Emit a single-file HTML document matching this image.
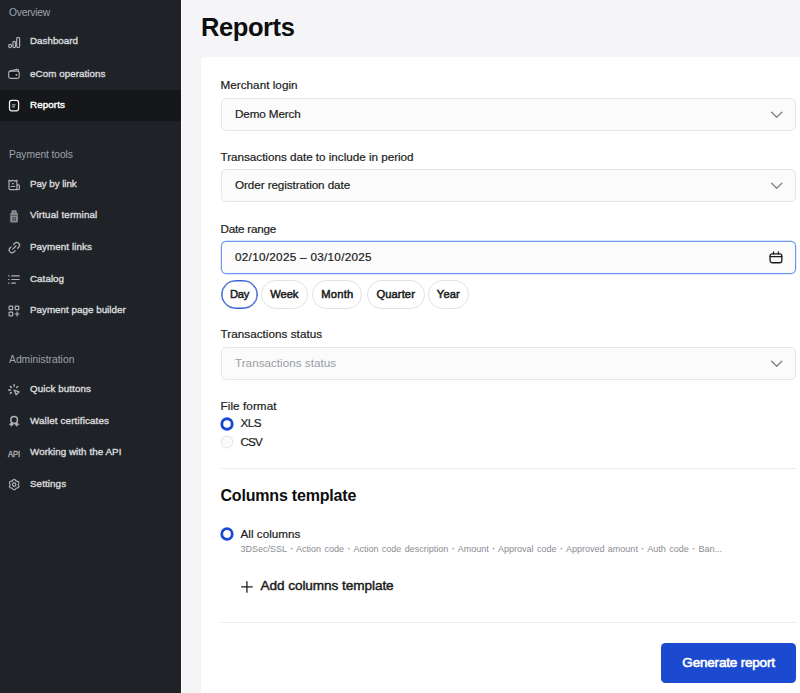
<!DOCTYPE html>
<html lang="en">
<head>
<meta charset="utf-8">
<title>Reports</title>
<style>
*{box-sizing:border-box;margin:0;padding:0}
html,body{width:800px;height:693px;overflow:hidden;background:#f5f5f7;font-family:"Liberation Sans",Arial,sans-serif;color:#1a1c20}
#side{position:absolute;left:0;top:0;width:181px;height:693px;background:#1f2227;color:#e6e7ea}
.sec{position:absolute;left:9px;font-size:10.3px;color:#9ea3ad;line-height:14px;white-space:nowrap}
.it{position:absolute;left:0;width:181px;height:31.5px;font-size:9.8px;color:#d6d7da;white-space:nowrap;-webkit-text-stroke:.4px #d6d7da}
.it span{position:absolute;left:30px;top:9px;line-height:13px}
.it.act{background:#15171a;color:#fff;-webkit-text-stroke-color:#fff}
#main{position:absolute;left:181px;top:0;width:619px;height:693px;background:#f5f5f7;box-shadow:inset 1px 0 0 #fcfcfd}
h1{position:absolute;left:20px;top:10px;font-size:25.5px;font-weight:bold;line-height:34px;color:#0d0e10;white-space:nowrap}
#card{position:absolute;left:19.5px;top:57px;width:620px;height:660px;background:#fff;border-radius:4px 0 0 0}
.lbl{position:absolute;left:20px;font-size:11.7px;line-height:16px;color:#1a1c20;white-space:nowrap;-webkit-text-stroke:.2px #1a1c20}
.fld{position:absolute;left:20px;width:575.5px;height:33.2px;border:1px solid #e5e6e8;border-radius:5px;background:#fbfbfb;font-size:11.7px;line-height:30px;padding-left:13.5px;color:#1a1c20;white-space:nowrap;-webkit-text-stroke:.2px #1a1c20}
.fld.focus{border-color:#6a98f0;box-shadow:0 0 0 .4px rgba(106,152,240,.5)}
.fld svg{position:absolute;left:548px;top:12px;width:14px;height:9px;fill:none;stroke:#7f8287;stroke-width:1.3;stroke-linecap:round;stroke-linejoin:round;overflow:visible}
.chip{position:absolute;top:222.7px;height:28.9px;border:1px solid #dfe1e5;border-radius:15px;font-size:11.2px;line-height:27.5px;text-align:center;color:#1a1c20;background:#fff;-webkit-text-stroke:.5px #1a1c20;white-space:nowrap}
.chip.on{border-color:#3560d8;box-shadow:inset 0 0 0 .6px #3560d8}
.radio{position:absolute;left:19.8px;width:14px;height:14px}
.rl{position:absolute;left:40px;font-size:11.7px;line-height:16px;white-space:nowrap;-webkit-text-stroke:.2px #1a1c20}
.hr{position:absolute;left:20px;width:575.5px;height:1px;background:#e9eaed}
h2{position:absolute;left:20px;top:429px;font-size:16px;font-weight:bold;line-height:20px;color:#0d0e10;white-space:nowrap}
.sub{position:absolute;left:40px;top:486px;font-size:9px;line-height:12px;color:#8a8c92;white-space:nowrap}
.add{position:absolute;left:60px;top:520px;font-size:13.6px;line-height:18px;color:#1a1c20;white-space:nowrap;-webkit-text-stroke:.45px #1a1c20}
.btn{position:absolute;left:460.4px;top:586.1px;width:135.4px;height:39.8px;background:#1b49d0;border-radius:4.5px;color:#fff;font-size:13.5px;line-height:39px;text-align:center;-webkit-text-stroke:.6px #fff;white-space:nowrap}
#s1{letter-spacing:-0.24px}
#s2{letter-spacing:-0.11px}
#s3{letter-spacing:0.01px}
#i1{letter-spacing:0.01px}
#i2{letter-spacing:0.06px}
#i3{letter-spacing:0.10px}
#i4{letter-spacing:-0.06px}
#i5{letter-spacing:0.14px}
#i6{letter-spacing:0.07px}
#i7{letter-spacing:0.05px}
#i8{letter-spacing:0.02px}
#i9{letter-spacing:0.08px}
#i10{letter-spacing:0.14px}
#i11{letter-spacing:0.06px}
#i12{letter-spacing:0.09px}
#h1{letter-spacing:-0.41px}
#l1{letter-spacing:0.03px}
#f1{letter-spacing:-0.12px}
#l2{letter-spacing:-0.02px}
#f2{letter-spacing:-0.08px}
#l3{letter-spacing:-0.23px}
#f3{letter-spacing:0.30px}
#c1{letter-spacing:-0.17px}
#c2{letter-spacing:-0.05px}
#c3{letter-spacing:0.24px}
#c4{letter-spacing:0.08px}
#c5{letter-spacing:0.12px}
#l4{letter-spacing:0.04px}
#f4{letter-spacing:0.01px}
#l5{letter-spacing:0.08px}
#r1{letter-spacing:-0.56px}
#r2{letter-spacing:-0.82px}
#h2{letter-spacing:-0.19px}
#r3{letter-spacing:0.02px}
#sub{word-spacing:0.93px}
#add{letter-spacing:-0.07px}
#btn{letter-spacing:-0.19px}
</style>
</head>
<body>
<div id="side">
<svg id="ico" width="181" height="693" viewBox="0 0 181 693" style="position:absolute;left:0;top:0;z-index:2;fill:none;stroke:#aeb1b7;stroke-width:1.2;stroke-linecap:round;stroke-linejoin:round">
<g><rect x="8.6" y="44.4" width="3" height="3.2" rx="1.5"/><rect x="12.9" y="41.3" width="2.6" height="6.3" rx="1.3"/><rect x="16.7" y="37.4" width="2.9" height="10.2" rx="1.45"/></g>
<g><rect x="8.7" y="71.2" width="10.5" height="7.1" rx="1.8" fill="#15171a"/><path d="M9.6 71 L17 69.3 Q18.3 69.1 18.4 70.2 V71"/><circle cx="16.4" cy="74.8" r=".9" fill="#c0c3c8" stroke="none"/></g>
<g stroke="#f2f2f2" stroke-width="1.25"><rect x="9.5" y="100.4" width="9.1" height="10.4" rx="2.2"/><path d="M12.3 104.9 H15.2 M12.3 106.9 H14.5" stroke-width="1" stroke="#c8c8c8"/></g>
<g><path d="M9 180.2 L10.9 181.1 L12.9 180.2 L14.9 181.1 L16.9 180.2 V189.7 M9 180.2 V188.6 Q9 189.7 10.1 189.7 H18.2 Q19.4 189.7 19.4 188.500 V186.100 Q19.400 184.900 18.200 184.900 H17.100 M11.100 186.500 H14.800"/><circle cx="12.900" cy="183.600" r=".9" fill="#aeb1b7" stroke="none"/></g>
<g stroke="none"><path fill="#8a8d93" d="M11.500 211.200 Q11.500 210.200 12.500 210.200 H15.700 Q16.700 210.200 16.700 211.200 V212.500 L17.900 213.700 V221.300 Q17.900 222.500 16.700 222.500 H11.400 Q10.200 222.500 10.200 221.300 V213.700 L11.500 212.500 Z"/><path d="M11.300 215.300 H16.900" stroke="#3b3e44" stroke-width=".7"/><rect x="12.400" y="217.300" width="1.400" height="1.300" fill="#2b2e33"/><rect x="14.500" y="217.300" width="1.400" height="1.300" fill="#2b2e33"/><rect x="12.400" y="219.300" width="1.400" height="1.300" fill="#2b2e33"/><rect x="14.500" y="219.300" width="1.400" height="1.300" fill="#2b2e33"/><rect x="13.700" y="211.900" width="1.400" height=".9" fill="#4a4d53"/></g>
<g transform="translate(14.35 247.6) rotate(-45) scale(.557) translate(-12 -12)" stroke-width="2.2"><path d="M15 7h3a5 5 0 0 1 5 5 5 5 0 0 1-5 5h-3m-6 0H6a5 5 0 0 1-5-5 5 5 0 0 1 5-5h3M8 12h8"/></g>
<g stroke-width="1.15"><path d="M8.6 275.9 H9.1 M8.6 279.5 H9.1 M8.6 283.1 H9.1 M11.7 275.9 H19.2 M11.7 279.5 H19.2 M11.7 283.1 H15.5"/></g>
<g><rect x="9.1" y="306.1" width="3.6" height="3.6" rx=".6"/><rect x="15.2" y="306.1" width="3.600" height="3.600" rx=".6"/><rect x="9.1" y="312.200" width="3.600" height="3.600" rx=".6"/><path d="M17.100 312.100 V315.900 M15.200 314 H19" stroke-width="1.2"/></g>
<g><path d="M14.100 390.100 L19.100 391.800 L16.100 394.800 Z" stroke-width="1.25"/><path d="M14.100 384.500 V386.200 M10.300 386.400 L11.600 387.500 M8.500 390 H10.600 M10.300 393.400 L11.500 392.400 M17.800 386.500 L16.600 387.500" stroke-width="1.4"/></g>
<g><circle cx="14.150" cy="419.900" r="3.300" stroke-width="1.5"/><path d="M11.300 422.600 L9.300 424.600 L10.900 424.900 L11.500 426.400 L13.500 424 Z M17 422.600 L19 424.600 L17.400 424.900 L16.800 426.400 L14.800 424 Z" fill="#aeb1b7" stroke-width=".6"/></g>
<text x="7.900" y="456.600" font-family="Liberation Sans, Arial, sans-serif" font-size="8.200" textLength="12.300" lengthAdjust="spacingAndGlyphs" fill="#aeb1b7" stroke="#aeb1b7" stroke-width=".35">API</text>
<g stroke-width="1.25"><path d="M18.15 484.60 L18.31 484.24 L18.52 483.83 L18.70 483.38 L18.79 482.91 L18.77 482.45 L18.61 482.03 L18.32 481.68 L17.93 481.42 L17.48 481.27 L17.00 481.20 L16.54 481.18 L16.15 481.14 L15.91 480.82 L15.67 480.43 L15.37 480.05 L15.01 479.73 L14.59 479.52 L14.15 479.45 L13.71 479.52 L13.29 479.73 L12.93 480.05 L12.63 480.43 L12.39 480.82 L12.15 481.14 L11.76 481.18 L11.30 481.20 L10.82 481.27 L10.37 481.42 L9.98 481.68 L9.69 482.03 L9.53 482.45 L9.51 482.91 L9.60 483.38 L9.78 483.83 L9.99 484.24 L10.15 484.60 L9.99 484.96 L9.78 485.37 L9.60 485.82 L9.51 486.29 L9.53 486.75 L9.69 487.18 L9.98 487.52 L10.37 487.78 L10.82 487.93 L11.30 488.00 L11.76 488.02 L12.15 488.06 L12.39 488.38 L12.63 488.77 L12.93 489.15 L13.29 489.47 L13.71 489.68 L14.15 489.75 L14.59 489.68 L15.01 489.47 L15.37 489.15 L15.67 488.77 L15.91 488.38 L16.15 488.06 L16.54 488.02 L17.00 488.00 L17.48 487.93 L17.93 487.78 L18.32 487.52 L18.61 487.18 L18.77 486.75 L18.79 486.29 L18.70 485.82 L18.52 485.37 L18.31 484.96Z"/><circle cx="14.150" cy="484.600" r="1.700"/></g>
</svg>
  <div class="sec" style="top:5px"><span id="s1" style="position:relative;top:1px">Overview</span></div>
  <div class="it" style="top:26.5px"><span id="i1" style="margin-top:-2px">Dashboard</span></div>
  <div class="it" style="top:58px"><span id="i2">eCom operations</span></div>
  <div class="it act" style="top:89.5px"><span id="i3" style="margin-top:-1px">Reports</span></div>
  <div class="sec" style="top:147px"><span id="s2" style="position:relative;top:1px">Payment tools</span></div>
  <div class="it" style="top:168.2px"><span id="i4">Pay by link</span></div>
  <div class="it" style="top:199.7px"><span id="i5" style="margin-top:-1px">Virtual terminal</span></div>
  <div class="it" style="top:231.2px"><span id="i6">Payment links</span></div>
  <div class="it" style="top:262.7px"><span id="i7">Catalog</span></div>
  <div class="it" style="top:294.2px"><span id="i8">Payment page builder</span></div>
  <div class="sec" style="top:352px"><span id="s3" style="position:relative;top:1px">Administration</span></div>
  <div class="it" style="top:373px"><span id="i9">Quick buttons</span></div>
  <div class="it" style="top:404.5px"><span id="i10">Wallet certificates</span></div>
  <div class="it" style="top:436px"><span id="i11">Working with the API</span></div>
  <div class="it" style="top:467.5px"><span id="i12">Settings</span></div>
</div>
<div id="main">
  <h1><span id="h1">Reports</span></h1>
  <div id="card">
    <div class="lbl" style="top:20px"><span id="l1">Merchant login</span></div>
    <div class="fld" style="top:41.2px"><span id="f1">Demo Merch</span><svg viewBox="0 0 14 9"><path d="M1.600 1.200l5.100 5.100 5.100-5.100"/></svg></div>
    <div class="lbl" style="top:92px"><span id="l2">Transactions date to include in period</span></div>
    <div class="fld" style="top:112.2px"><span id="f2">Order registration date</span><svg viewBox="0 0 14 9"><path d="M1.600 1.200l5.100 5.100 5.100-5.100"/></svg></div>
    <div class="lbl" style="top:164px"><span id="l3">Date range</span></div>
    <div class="fld focus" style="top:183.500px"><span id="f3">02/10/2025 – 03/10/2025</span><svg viewBox="0 0 14 13" style="stroke:#1a1c20;left:547px;top:9.500px;width:14px;height:13px"><rect x="1.050" y="2.950" width="11.800" height="8.800" rx="2.200"/><path d="M1.050 5.700H12.850M4.500 1V3M9.400 1V3"/></svg></div>
    <div class="chip on" style="left:20.2px;width:37.8px"><span id="c1">Day</span></div>
    <div class="chip" style="left:60.5px;width:46.6px"><span id="c2">Week</span></div>
    <div class="chip" style="left:111.7px;width:50.3px"><span id="c3">Month</span></div>
    <div class="chip" style="left:166.4px;width:57.7px"><span id="c4">Quarter</span></div>
    <div class="chip" style="left:227px;width:41.8px"><span id="c5">Year</span></div>
    <div class="lbl" style="top:269px"><span id="l4">Transactions status</span></div>
    <div class="fld" style="top:289.500px;color:#9a9da3;-webkit-text-stroke:0"><span id="f4">Transactions status</span><svg viewBox="0 0 14 9"><path d="M1.600 1.200l5.100 5.100 5.100-5.100"/></svg></div>
    <div class="lbl" style="top:341px"><span id="l5">File format</span></div>
    <svg class="radio" style="top:360.1px" viewBox="0 0 14 14"><circle cx="7" cy="7" r="5.2" fill="#fff" stroke="#1b48d3" stroke-width="2.9"/></svg><div class="rl" style="top:358px"><span id="r1">XLS</span></div>
    <svg class="radio" style="top:378px" viewBox="0 0 14 14"><circle cx="7" cy="7" r="5.900" fill="#fafafa" stroke="#e6e7e9" stroke-width="1.100"/></svg><div class="rl" style="top:377px"><span id="r2">CSV</span></div>
    <div class="hr" style="top:411px"></div>
    <h2><span id="h2">Columns template</span></h2>
    <svg class="radio" style="top:469.9px" viewBox="0 0 14 14"><circle cx="7" cy="7" r="5.270" fill="#fff" stroke="#1b48d3" stroke-width="2.750"/></svg><div class="rl" style="top:469px"><span id="r3">All columns</span></div>
    <div class="sub"><span id="sub">3DSec/SSL <b>·</b> Action code <b>·</b> Action code description <b>·</b> Amount <b>·</b> Approval code <b>·</b> Approved amount <b>·</b> Auth code <b>·</b> Ban...</span></div>
    <svg style="position:absolute;left:39px;top:522.5px;width:14px;height:14px;stroke:#1a1c20;stroke-width:1.300;stroke-linecap:round;fill:none" viewBox="0 0 14 14"><path d="M6.900 1.700v10.500M1.650 6.950h10.500"/></svg>
    <div class="add"><span id="add">Add columns template</span></div>
    <div class="hr" style="top:565px"></div>
    <div class="btn"><span id="btn">Generate report</span></div>
  </div>
</div>
</body>
</html>
